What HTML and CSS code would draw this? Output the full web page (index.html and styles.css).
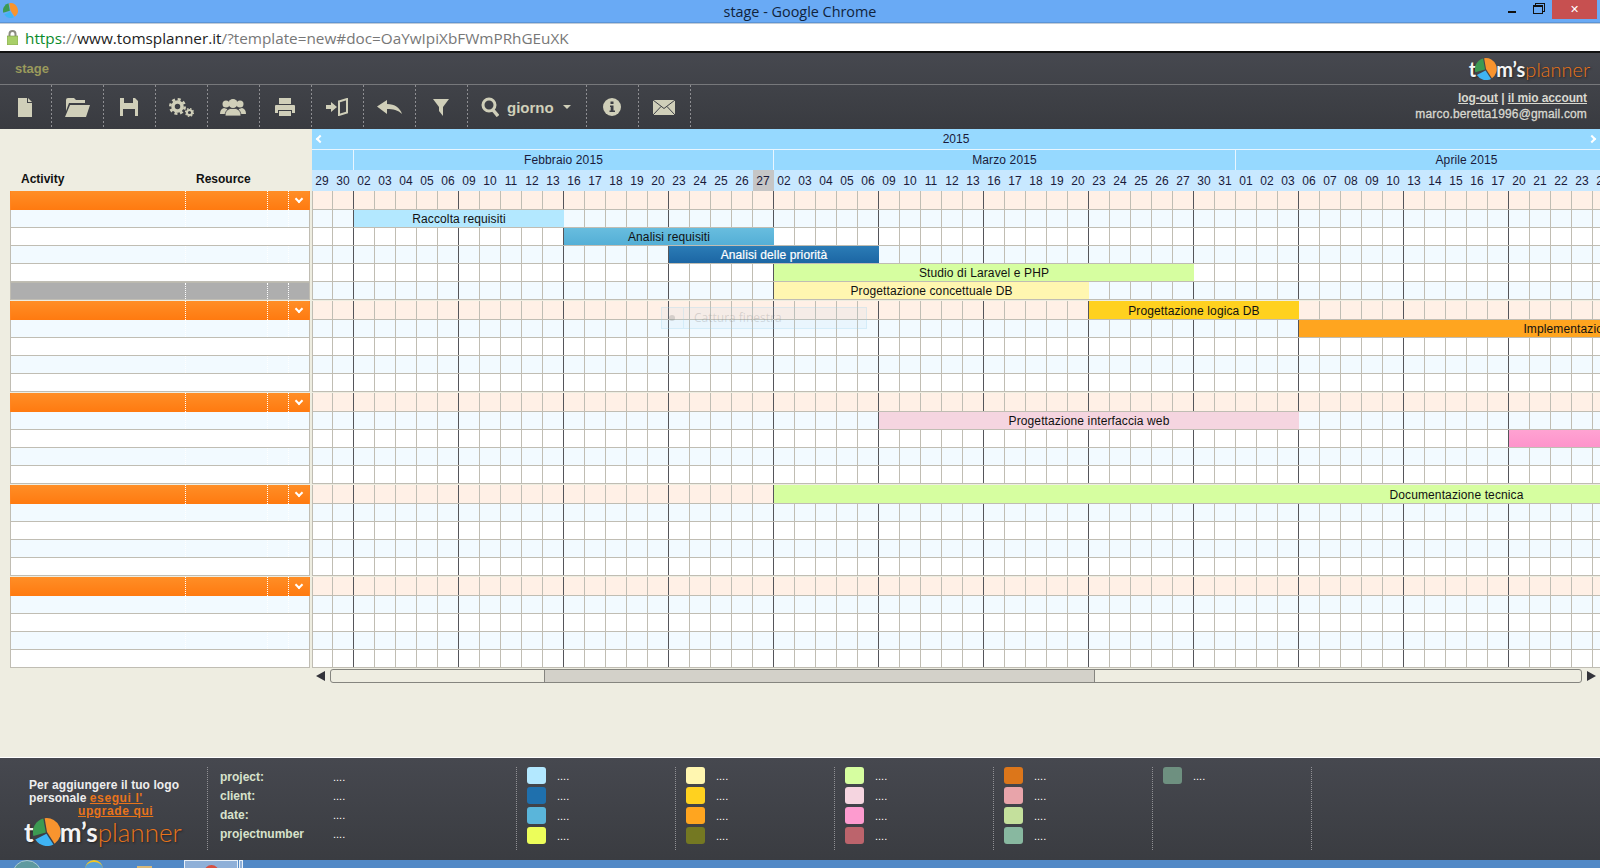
FILE: index.html
```html
<!DOCTYPE html>
<html lang="it">

<head>
    <meta charset="UTF-8">
    <title>stage - Google Chrome</title>
    <link rel="stylesheet" href="styles.css">
</head>

<body>
    <svg class="defs" width="0" height="0">
        <symbol id="pie" viewBox="0 0 24 24">
            <path fill="#f8942e" d="M12 12 10 .2A12 12 0 0 1 18.500 22Z" />
            <path fill="#3c9a52" d="M11 12.500 .4 15.500A12 12 0 0 1 8.800 .5Z" />
            <path fill="#3fb4f4" d="M11.500 13.500 17.500 22.800A12 12 0 0 1 2 18.500Z" />
        </symbol>
    </svg>

    <!-- browser chrome -->
    <div class="titlebar">
        <svg class="favicon"><use href="#pie" /></svg>
        <div class="window-title">stage - Google Chrome</div>
        <div class="window-btns">
            <span class="win-min"></span>
            <span class="win-restore"></span>
            <span class="win-close">&#10005;</span>
        </div>
    </div>
    <div class="addressbar">
        <svg class="lock" width="11" height="15" viewBox="0 0 11 15">
            <path fill="none" stroke="#8b8b80" stroke-width="2" d="M2.500 7V4a3 3 0 0 1 6 0v3" />
            <rect y="6" width="11" height="9" fill="#a8cf68" stroke="#7a9a4a" stroke-width=".6" />
        </svg>
        <span class="url"><span class="url-https">https</span>://<span class="url-host">www.tomsplanner.it</span>/?template=new#doc=OaYwIpiXbFWmPRhGEuXK</span>
    </div>

    <!-- app header -->
    <div class="app-head">
        <div class="app-top">
            <span class="doc-name">stage</span>
            <div class="logo">
                <span class="logo-t">t</span><svg class="logo-pie"><use href="#pie" /></svg><span class="logo-t">m&rsquo;s</span><span class="logo-p">planner</span>
            </div>
        </div>
        <div class="toolbar">
            <div class="tool">
                <svg width="14" height="19" viewBox="0 0 14 19"><path d="M0 0h9v5h5v14H0zM10 0l4 4h-4z" /></svg>
            </div>
            <div class="tool">
                <svg width="25" height="19" viewBox="0 0 25 19"><path d="M1 2q0-2 2-2h6l2 2h9v3H4L1 13zM5 7h20l-4 12H0z" /></svg>
            </div>
            <div class="tool">
                <svg width="18" height="18" viewBox="0 0 18 18"><path d="M0 0h4v5h9V0h2l3 3v15h-3v-7H3v7H0z" /></svg>
            </div>
            <div class="tool">
                <svg width="25" height="19" viewBox="0 0 25 19">
                    <circle cx="8.500" cy="8.500" r="4.500" fill="none" stroke="#d0cfb9" stroke-width="3.500" />
                    <circle cx="8.500" cy="8.500" r="7.200" fill="none" stroke="#d0cfb9" stroke-width="2.600" stroke-dasharray="3 2.650" />
                    <circle cx="20.500" cy="14.500" r="2.600" fill="none" stroke="#d0cfb9" stroke-width="2" />
                    <circle cx="20.500" cy="14.500" r="3.900" fill="none" stroke="#d0cfb9" stroke-width="1.300" stroke-dasharray="1.600 1.460" />
                </svg>
            </div>
            <div class="tool">
                <svg width="26" height="17" viewBox="0 0 26 17">
                    <circle cx="6" cy="5" r="3.500" /><circle cx="20" cy="5" r="3.500" />
                    <path d="M0 15q0-5 4-6l3 1v5zM26 15q0-5-4-6l-3 1v5z" />
                    <circle cx="13" cy="4.500" r="4.500" />
                    <path d="M5 17q0-6 5-7.500h6q5 1.500 5 7.500z" stroke="#3c3e44" stroke-width=".8" />
                </svg>
            </div>
            <div class="tool">
                <svg width="20" height="18" viewBox="0 0 20 18"><path d="M4 0h12v6H4zM1 7h18q1 0 1 1v7h-3v-3H3v3H0V8q0-1 1-1zM4 13h12v5H4z" /></svg>
            </div>
            <div class="tool">
                <svg width="22" height="18" viewBox="0 0 22 18">
                    <path d="M0 7h5V4l6 5-6 5v-3H0z" />
                    <path fill="none" stroke="#d0cfb9" stroke-width="2" d="M13 3.500 21 1v13.500l-8 2.500zM13 3.500h-1" />
                </svg>
            </div>
            <div class="tool">
                <svg width="25" height="14" viewBox="0 0 25 14"><path d="M0 6.500 10 0v4c8 0 13 4 15 10-4-4-9-5-15-5v5z" /></svg>
            </div>
            <div class="tool">
                <svg width="16" height="17" viewBox="0 0 16 17"><path d="M0 0h16L10 8v9L6 12V8z" /></svg>
            </div>
            <div class="tool tool-zoom">
                <svg width="18" height="20" viewBox="0 0 18 20">
                    <circle cx="8" cy="8" r="6" fill="none" stroke="#d0cfb9" stroke-width="3" />
                    <path fill="none" stroke="#d0cfb9" stroke-width="3.500" d="M12 13l5 6" />
                </svg>
                <span class="zoom-label">giorno</span>
                <span class="caret"></span>
            </div>
            <div class="tool">
                <svg width="18" height="18" viewBox="0 0 18 18">
                    <circle cx="9" cy="9" r="9" />
                    <path fill="#3c3e44" d="M7.500 3.500h3v2.500h-3zM7 7.500h3.500v5H12V14H6.500v-1.500h1.200V9H7z" />
                </svg>
            </div>
            <div class="tool">
                <svg width="22" height="15" viewBox="0 0 22 15">
                    <rect width="22" height="15" />
                    <path fill="none" stroke="#3c3e44" d="M0 0l11 8.500L22 0M0 15l8-8.500M22 15l-8-8.500" />
                </svg>
            </div>
            <div class="account">
                <div class="account-links"><a class="account-link">log-out</a> | <a class="account-link">il mio account</a></div>
                <div class="account-mail">marco.beretta1996@gmail.com</div>
            </div>
        </div>
    </div>

    <div class="main">
        <!-- activity table -->
        <div class="left">
            <div class="left-head">
                <span class="col-activity">Activity</span>
                <span>Resource</span>
            </div>
            <div class="group">
                <div class="lrow"><i></i><i></i><i></i><span class="chev"></span></div>
                <div class="lrow"><i></i><i></i><i></i></div>
                <div class="lrow"><i></i><i></i><i></i></div>
                <div class="lrow"><i></i><i></i><i></i></div>
                <div class="lrow"><i></i><i></i><i></i></div>
                <div class="lrow lrow-gray"><i></i><i></i><i></i></div>
            </div>
            <div class="group">
                <div class="lrow"><i></i><i></i><i></i><span class="chev"></span></div>
                <div class="lrow"><i></i><i></i><i></i></div>
                <div class="lrow"><i></i><i></i><i></i></div>
                <div class="lrow"><i></i><i></i><i></i></div>
                <div class="lrow"><i></i><i></i><i></i></div>
            </div>
            <div class="group">
                <div class="lrow"><i></i><i></i><i></i><span class="chev"></span></div>
                <div class="lrow"><i></i><i></i><i></i></div>
                <div class="lrow"><i></i><i></i><i></i></div>
                <div class="lrow"><i></i><i></i><i></i></div>
                <div class="lrow"><i></i><i></i><i></i></div>
            </div>
            <div class="group">
                <div class="lrow"><i></i><i></i><i></i><span class="chev"></span></div>
                <div class="lrow"><i></i><i></i><i></i></div>
                <div class="lrow"><i></i><i></i><i></i></div>
                <div class="lrow"><i></i><i></i><i></i></div>
                <div class="lrow"><i></i><i></i><i></i></div>
            </div>
            <div class="group">
                <div class="lrow"><i></i><i></i><i></i><span class="chev"></span></div>
                <div class="lrow"><i></i><i></i><i></i></div>
                <div class="lrow"><i></i><i></i><i></i></div>
                <div class="lrow"><i></i><i></i><i></i></div>
                <div class="lrow"><i></i><i></i><i></i></div>
            </div>
        </div>

        <!-- gantt chart -->
        <div class="chart">
            <div class="year-row">
                <span class="nav nav-prev"></span>
                <span>2015</span>
                <span class="nav nav-next"></span>
            </div>
            <div class="month-row">
                <span class="month m-start"></span>
                <span class="month m-feb">Febbraio 2015</span>
                <span class="month m-mar">Marzo 2015</span>
                <span class="month m-apr">Aprile 2015</span>
            </div>
            <div class="day-row">
                <span>29</span><span>30</span>
                <span>02</span><span>03</span><span>04</span><span>05</span><span>06</span>
                <span>09</span><span>10</span><span>11</span><span>12</span><span>13</span>
                <span>16</span><span>17</span><span>18</span><span>19</span><span>20</span>
                <span>23</span><span>24</span><span>25</span><span>26</span><span class="today">27</span>
                <span>02</span><span>03</span><span>04</span><span>05</span><span>06</span>
                <span>09</span><span>10</span><span>11</span><span>12</span><span>13</span>
                <span>16</span><span>17</span><span>18</span><span>19</span><span>20</span>
                <span>23</span><span>24</span><span>25</span><span>26</span><span>27</span>
                <span>30</span><span>31</span>
                <span>01</span><span>02</span><span>03</span>
                <span>06</span><span>07</span><span>08</span><span>09</span><span>10</span>
                <span>13</span><span>14</span><span>15</span><span>16</span><span>17</span>
                <span>20</span><span>21</span><span>22</span><span>23</span><span>24</span>
                <span>27</span>
            </div>

            <div class="group">
                <div class="crow"></div>
                <div class="crow"><div class="bar b-raccolta">Raccolta requisiti</div></div>
                <div class="crow"><div class="bar b-analisi">Analisi requisiti</div></div>
                <div class="crow"><div class="bar b-priorita">Analisi delle priorità</div></div>
                <div class="crow"><div class="bar b-laravel">Studio di Laravel e PHP</div></div>
                <div class="crow"><div class="bar b-concettuale">Progettazione concettuale DB</div></div>
            </div>
            <div class="group">
                <div class="crow"><div class="bar b-logica">Progettazione logica DB</div></div>
                <div class="crow"><div class="bar b-impl">Implementazione</div></div>
                <div class="crow"></div>
                <div class="crow"></div>
                <div class="crow"></div>
            </div>
            <div class="group">
                <div class="crow"></div>
                <div class="crow"><div class="bar b-interfaccia">Progettazione interfaccia web</div></div>
                <div class="crow"><div class="bar b-pink"></div></div>
                <div class="crow"></div>
                <div class="crow"></div>
            </div>
            <div class="group">
                <div class="crow"><div class="bar b-doc">Documentazione tecnica</div></div>
                <div class="crow"></div>
                <div class="crow"></div>
                <div class="crow"></div>
                <div class="crow"></div>
            </div>
            <div class="group">
                <div class="crow"></div>
                <div class="crow"></div>
                <div class="crow"></div>
                <div class="crow"></div>
                <div class="crow"></div>
            </div>

            <div class="hscroll">
                <span class="arrow-left"></span>
                <div class="track"><div class="thumb"></div></div>
                <span class="arrow-right"></span>
            </div>

            <!-- faded windows tooltip lying over the chart -->
            <div class="ghost">
                <span class="ghost-icon"></span>
                <span class="ghost-text">Cattura finestra</span>
            </div>
        </div>
    </div>

    <!-- legend -->
    <div class="footer">
        <div class="brand">
            <div class="brand-text">
                Per aggiungere il tuo logo<br>
                personale <a class="upgrade">esegui l'</a><br>
                <a class="upgrade upgrade-2">upgrade qui</a>
            </div>
            <div class="logo logo-big">
                <span class="logo-t">t</span><svg class="logo-pie"><use href="#pie" /></svg><span class="logo-t">m&rsquo;s</span><span class="logo-p">planner</span>
            </div>
        </div>
        <div class="meta">
            <div class="meta-row"><b>project:</b><span>....</span></div>
            <div class="meta-row"><b>client:</b><span>....</span></div>
            <div class="meta-row"><b>date:</b><span>....</span></div>
            <div class="meta-row"><b>projectnumber</b><span>....</span></div>
        </div>
        <div class="legend">
            <div class="key"><span class="sw c1"></span>....</div>
            <div class="key"><span class="sw c2"></span>....</div>
            <div class="key"><span class="sw c3"></span>....</div>
            <div class="key"><span class="sw c4"></span>....</div>
        </div>
        <div class="legend">
            <div class="key"><span class="sw c5"></span>....</div>
            <div class="key"><span class="sw c6"></span>....</div>
            <div class="key"><span class="sw c7"></span>....</div>
            <div class="key"><span class="sw c8"></span>....</div>
        </div>
        <div class="legend">
            <div class="key"><span class="sw c9"></span>....</div>
            <div class="key"><span class="sw c10"></span>....</div>
            <div class="key"><span class="sw c11"></span>....</div>
            <div class="key"><span class="sw c12"></span>....</div>
        </div>
        <div class="legend">
            <div class="key"><span class="sw c13"></span>....</div>
            <div class="key"><span class="sw c14"></span>....</div>
            <div class="key"><span class="sw c15"></span>....</div>
            <div class="key"><span class="sw c16"></span>....</div>
        </div>
        <div class="legend">
            <div class="key"><span class="sw c17"></span>....</div>
        </div>
        <div class="legend"></div>
    </div>

    <!-- windows taskbar, cut off by the window edge -->
    <div class="taskbar">
        <span class="orb"></span>
        <span class="task-ie"></span>
        <span class="task-folder"></span>
        <span class="task-active"><span class="task-chrome"></span></span>
        <span class="task-peek"></span>
    </div>
</body>

</html>
```

FILE: styles.css
```css
* {
    box-sizing: border-box;
}

body {
    margin: 0;
    width: 1600px;
    height: 868px;
    overflow: hidden;
    background-color: #eeede1;
    font-family: "Liberation Sans", Arial, sans-serif;
    font-size: 12px;
    color: #111;
}

.defs {
    position: absolute;
}

/* browser chrome */
.titlebar {
    display: grid;
    grid-template-columns: 1fr auto 1fr;
    height: 23px;
    background-color: #69aaf5;
    border-bottom: 1px solid #5b94d6;
}

.favicon {
    width: 15px;
    height: 15px;
    margin: 3px 0 0 3px;
}

.window-title {
    font-family: "Open Sans", sans-serif;
    font-size: 14.400px;
    line-height: 23px;
    color: #10233c;
}

.window-btns {
    display: flex;
    justify-content: flex-end;
    align-items: flex-start;
    padding-right: 3px;
}

.win-min {
    width: 8px;
    height: 2px;
    margin: 11px 17px 0 0;
    background-color: #111;
}

.win-restore {
    width: 10px;
    height: 9px;
    margin: 5px 9px 0 0;
    border: 1px solid #111;
    border-top-width: 2px;
    box-shadow: 2px -2px 0 -1px #69aaf5, 2px -2px 0 0 #111;
}

.win-close {
    width: 45px;
    height: 19px;
    background-color: #c75050;
    color: #fff;
    font-size: 11px;
    line-height: 19px;
    text-align: center;
}

.addressbar {
    display: flex;
    align-items: center;
    height: 30px;
    padding-left: 7px;
    background-color: #fff;
    border-top: 1px solid #c3ccd6;
    border-bottom: 2px solid #111;
}

.lock {
    margin-right: 7px;
}

.url {
    font-family: "Open Sans", sans-serif;
    font-size: 15.300px;
    color: #777;
}

.url-https {
    color: #0a8a2a;
}

.url-host {
    color: #222;
}

/* app header */
.app-head {
    height: 76px;
    background: linear-gradient(#46484f, #393b40);
}

.app-top {
    display: flex;
    justify-content: space-between;
    align-items: center;
    height: 32px;
    padding: 0 10px 0 15px;
    border-bottom: 1px solid #77787b;
}

.doc-name {
    font-size: 13px;
    font-weight: bold;
    color: #9a9a5c;
}

.logo {
    display: flex;
    align-items: center;
    font-family: Lato, sans-serif;
    font-size: 20px;
    line-height: 24px;
    text-shadow: 1px 1px 2px #222;
}

.logo-t {
    font-weight: 700;
    color: #f4f4f4;
}

.logo-p {
    font-weight: 300;
    color: #e9741a;
}

.logo-pie {
    width: 22px;
    height: 22px;
    margin: 0 -1px;
}

.logo-big {
    font-size: 26px;
    line-height: 28px;
}

.logo-big .logo-pie {
    width: 28px;
    height: 28px;
}

.toolbar {
    display: flex;
    height: 44px;
}

.toolbar svg {
    fill: #d0cfb9;
}

.tool {
    display: flex;
    justify-content: center;
    align-items: center;
    width: 52px;
    padding-right: 2px;
    background: repeating-linear-gradient(#8e8e92 0 2px, transparent 2px 4px) right / 1px 100% no-repeat;
}

.tool-zoom {
    justify-content: flex-start;
    width: 119px;
    padding-left: 13px;
}

.zoom-label {
    margin: 0 9px 0 8px;
    font-size: 15px;
    font-weight: bold;
    color: #d0cfb9;
}

.caret {
    border-top: 4px solid #d0cfb9;
    border-left: 4px solid transparent;
    border-right: 4px solid transparent;
}

.account {
    margin-left: auto;
    padding: 5px 13px 0 0;
    text-align: right;
    font-weight: bold;
    line-height: 16px;
    color: #d8d8d0;
}

.account-links {
    letter-spacing: -.1px;
}

.account-link {
    text-decoration: underline;
}

.account-mail {
    font-weight: normal;
    letter-spacing: .15px;
    -webkit-text-stroke: .3px #d8d8d0;
}

/* main area */
.main {
    display: flex;
    height: 628px;
}

.left {
    width: 312px;
    padding-left: 10px;
}

.left-head {
    display: flex;
    align-items: flex-end;
    width: 300px;
    height: 62px;
    padding: 0 0 5px 11px;
    font-weight: bold;
}

.col-activity {
    width: 175px;
}

.group {
    margin-bottom: 1px;
}

.lrow {
    display: flex;
    width: 300px;
    height: 18px;
    background-color: #fff;
    border: 1px solid #c0bdb3;
    border-width: 0 1px 1px;
}

.lrow:nth-child(even) {
    background-color: #f2faff;
}

.lrow:first-child {
    height: 19px;
    background: linear-gradient(#ff8e26, #ff7a10);
    border-color: #ff8420;
    border-bottom: 0;
}

.group .lrow-gray {
    background-color: #aeaeae;
    border-top: 1px solid #bbb9af;
}

.lrow i {
    width: 21px;
    border-right: 1px dotted #fff;
}

.lrow i:nth-child(1) {
    width: 175px;
}

.lrow i:nth-child(2) {
    width: 82px;
}

.chev {
    width: 6px;
    height: 6px;
    margin: 5px 0 0 7px;
    border-right: 2px solid #fff;
    border-bottom: 2px solid #fff;
    transform: rotate(45deg);
}

/* chart */
.chart {
    position: relative;
    width: 1288px;
    overflow: hidden;
}

.year-row {
    display: flex;
    justify-content: space-between;
    align-items: center;
    height: 21px;
    padding: 0 5px;
    background-color: #96d9ff;
    border-bottom: 1px solid #e8f6ff;
    color: #1a1a3a;
}

.nav {
    width: 6px;
    height: 6px;
    border-left: 2px solid #fff;
    border-bottom: 2px solid #fff;
}

.nav-prev {
    transform: rotate(45deg);
}

.nav-next {
    transform: rotate(225deg);
}

.month-row,
.day-row,
.crow {
    display: grid;
    grid-template-columns: repeat(90, 21px);
    overflow: hidden;
}

.month-row {
    height: 20px;
    background-color: #96d9ff;
    color: #1a1a3a;
}

.month {
    line-height: 20px;
    text-align: center;
    letter-spacing: .12px;
    border-right: 1px solid #e8f6ff;
}

.m-start {
    grid-column: span 2;
}

.m-feb {
    grid-column: span 20;
}

.m-mar,
.m-apr {
    grid-column: span 22;
}

.day-row {
    height: 21px;
    background-color: #c8e8ff;
    line-height: 23px;
    text-align: center;
    color: #1a1a3a;
}

.day-row span {
    padding-right: 1px;
}

.today {
    background-color: #c6c6c6;
}

.crow {
    height: 18px;
    background-color: #fff;
    background-image:
        repeating-linear-gradient(90deg, transparent 0 41px, #55555a 41px 42px, transparent 42px 105px),
        repeating-linear-gradient(90deg, transparent 0 20px, #c0bdb3 20px 21px);
    border-bottom: 1px solid #c0bdb3;
    box-shadow: inset 1px 0 0 #c0bdb3;
}

.crow:nth-child(even) {
    background-color: #f2faff;
}

.crow:first-child {
    height: 19px;
    background-color: #fff0e6;
}

.bar {
    overflow: hidden;
    white-space: nowrap;
    text-align: center;
    line-height: 19px;
    letter-spacing: .12px;
    color: #111;
}

.crow:first-child .bar {
    line-height: 20px;
}

.b-raccolta {
    grid-column: 3 / span 10;
    background-color: #b3e8ff;
}

.b-analisi {
    grid-column: 13 / span 10;
    background: linear-gradient(#68bddf, #54afd6);
}

.b-priorita {
    grid-column: 18 / span 10;
    background: linear-gradient(#2b7cb6, #1c66a4);
    color: #fff;
    -webkit-text-stroke: .2px #fff;
}

.b-laravel {
    grid-column: 23 / span 20;
    background-color: #d6fea0;
}

.b-concettuale {
    grid-column: 23 / span 15;
    background-color: #fff6b0;
}

.b-logica {
    grid-column: 38 / span 10;
    background-color: #ffd11f;
}

.b-impl {
    grid-column: 48 / span 26;
    padding-right: 4px;
    background-color: #ffa51f;
}

.b-interfaccia {
    grid-column: 28 / span 20;
    background-color: #f5d5e0;
}

.b-pink {
    grid-column: 58 / span 10;
    background: linear-gradient(#ffa2d2, #fd94cb);
}

.b-doc {
    grid-column: 23 / span 65;
    background-color: #d6fea0;
}

/* scrollbar */
.hscroll {
    display: flex;
    align-items: center;
    gap: 4px;
    width: 1288px;
    height: 14px;
    padding-left: 4px;
}

.arrow-left,
.arrow-right {
    border-top: 5px solid transparent;
    border-bottom: 5px solid transparent;
}

.arrow-left {
    margin-right: 1px;
    border-right: 9px solid #33333a;
}

.arrow-right {
    margin-left: 1px;
    border-left: 9px solid #33333a;
}

.track {
    width: 1252px;
    height: 14px;
    border: 1px solid #85857f;
    border-radius: 3px;
}

.thumb {
    width: 551px;
    height: 12px;
    margin-left: 213px;
    background-color: #d3d1c9;
    border-left: 1px solid #85857f;
    border-right: 1px solid #85857f;
}

.ghost {
    position: absolute;
    left: 349px;
    top: 178px;
    display: flex;
    width: 206px;
    height: 22px;
    background-color: rgba(170, 215, 240, .12);
    border: 1px solid rgba(150, 210, 240, .25);
}

.ghost-icon {
    position: relative;
    width: 22px;
    border-right: 1px solid rgba(150, 210, 240, .25);
}

.ghost-icon::after {
    content: "";
    position: absolute;
    left: 7px;
    top: 7px;
    width: 6px;
    height: 6px;
    border-radius: 50%;
    background-color: rgba(120, 120, 120, .25);
}

.ghost-text {
    padding-left: 10px;
    font-family: "Open Sans", sans-serif;
    font-size: 12px;
    line-height: 20px;
    color: rgba(120, 120, 120, .25);
}

/* legend */
.footer {
    display: flex;
    height: 103px;
    padding-top: 9px;
    background: linear-gradient(#46484f, #3a3c41);
    border-top: 1px solid #fff;
    color: #e8e8e0;
}

.brand {
    width: 207px;
    padding-top: 12px;
}

.brand-text {
    padding-left: 29px;
    font-size: 12px;
    font-weight: bold;
    line-height: 13px;
    letter-spacing: .08px;
    color: #eee;
}

.upgrade {
    letter-spacing: .6px;
    color: #e9741a;
    text-decoration: underline;
}

.upgrade-2 {
    margin-left: 49px;
}

.logo-big {
    margin: 0 0 0 24px;
}

.meta,
.legend {
    height: 83px;
    border-left: 1px dotted #909094;
}

.meta {
    width: 309px;
    padding: 1px 0 0 12px;
}

.meta-row {
    display: flex;
    line-height: 19px;
    color: #fff;
    font-size: 11px;
}

.meta-row b {
    width: 113px;
    font-size: 12px;
    color: #d8e2cc;
}

.legend {
    width: 159px;
    padding-left: 10px;
}

.key {
    display: flex;
    align-items: center;
    height: 17px;
    margin-bottom: 3px;
    font-size: 11px;
    color: #fff;
}

.sw {
    width: 19px;
    height: 17px;
    margin-right: 11px;
    border-radius: 3px;
}

.c1 { background-color: #b3e8ff; }
.c2 { background-color: #1f70ad; }
.c3 { background-color: #5ab5da; }
.c4 { background-color: #ecfd5a; }
.c5 { background-color: #fff6b0; }
.c6 { background-color: #ffd11f; }
.c7 { background-color: #ffa51f; }
.c8 { background-color: #747822; }
.c9 { background-color: #d6fea0; }
.c10 { background-color: #f5d5e0; }
.c11 { background-color: #fd9bcf; }
.c12 { background-color: #bc646c; }
.c13 { background-color: #dc761a; }
.c14 { background-color: #e8a4aa; }
.c15 { background-color: #c4e09c; }
.c16 { background-color: #88b8a0; }
.c17 { background-color: #6e9080; }

/* taskbar */
.taskbar {
    display: flex;
    height: 8px;
    overflow: hidden;
    background-color: #5289c6;
}

.orb {
    width: 30px;
    height: 30px;
    margin-left: 12px;
    border-radius: 50%;
    background-color: #5f9aa0;
    border: 1px solid #a8c8d0;
}

.task-ie {
    width: 18px;
    height: 18px;
    margin-left: 43px;
    border-radius: 50%;
    background-color: #58a0d8;
    border-top: 2px solid #f4c820;
}

.task-folder {
    width: 15px;
    height: 10px;
    margin: 6px 0 0 34px;
    background-color: #d8b878;
}

.task-active {
    display: flex;
    justify-content: center;
    width: 54px;
    height: 8px;
    margin-left: 32px;
    background-color: #8fb0d8;
    border: 1px solid #e8f0f8;
    border-bottom: 0;
}

.task-chrome {
    width: 15px;
    height: 15px;
    margin-top: 4px;
    border-radius: 50%;
    background-color: #d85040;
}

.task-peek {
    width: 4px;
    margin-left: 1px;
    background-color: #8fb0d8;
    border: 1px solid #e8f0f8;
    border-bottom: 0;
}
```
